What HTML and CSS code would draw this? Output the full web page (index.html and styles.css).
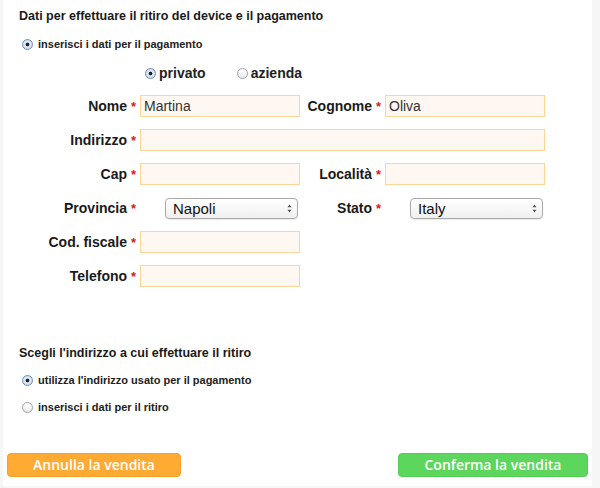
FILE: index.html
```html
<!DOCTYPE html>
<html lang="it">
<head>
<meta charset="utf-8">
<link rel="stylesheet" href="styles.css">
</head>
<body>
<div class="page">
  <div class="content">
    <h2 class="title">Dati per effettuare il ritiro del device e il pagamento</h2>
    <label class="opt small first"><input type="radio" name="pay" checked> inserisci i dati per il pagamento</label>

    <div class="kind">
      <label class="opt big"><input type="radio" name="kind" checked>privato</label>
      <label class="opt big"><input type="radio" name="kind">azienda</label>
    </div>

    <div class="grid">
      <div class="lbl">Nome <span class="req">*</span></div>
      <input class="field" type="text" value="Martina">
      <div class="lbl">Cognome <span class="req">*</span></div>
      <input class="field" type="text" value="Oliva">

      <div class="lbl">Indirizzo <span class="req">*</span></div>
      <input class="field wide" type="text" value="">

      <div class="lbl">Cap <span class="req">*</span></div>
      <input class="field" type="text" value="">
      <div class="lbl">Località <span class="req">*</span></div>
      <input class="field" type="text" value="">

      <div class="lbl">Provincia <span class="req">*</span></div>
      <div class="sel"><select><option>Napoli</option></select><span class="arrows"><svg width="5" height="9" viewBox="0 0 5 9"><path d="M2.5 0.5 L4.5 3.3 H0.5 Z M2.5 8.5 L4.5 5.7 H0.5 Z" fill="#555"/></svg></span></div>
      <div class="lbl">Stato <span class="req">*</span></div>
      <div class="sel"><select><option>Italy</option></select><span class="arrows"><svg width="5" height="9" viewBox="0 0 5 9"><path d="M2.5 0.5 L4.5 3.3 H0.5 Z M2.5 8.5 L4.5 5.7 H0.5 Z" fill="#555"/></svg></span></div>

      <div class="lbl">Cod. fiscale <span class="req">*</span></div>
      <input class="field" type="text" value="">
      <div class="blank"></div>

      <div class="lbl">Telefono <span class="req">*</span></div>
      <input class="field" type="text" value="">
      <div class="blank"></div>
    </div>

    <h2 class="title second">Scegli l'indirizzo a cui effettuare il ritiro</h2>
    <label class="opt small first2"><input type="radio" name="pick" checked> utilizza l'indirizzo usato per il pagamento</label>
    <label class="opt small next"><input type="radio" name="pick"> inserisci i dati per il ritiro</label>
  </div>

  <div class="actions">
    <button class="btn cancel">Annulla la vendita</button>
    <button class="btn confirm">Conferma la vendita</button>
  </div>
</div>
</body>
</html>
```

FILE: styles.css
```css
html, body {
  margin: 0;
  padding: 0;
  background: #f6f6f6;
}
body {
  font-family: "Liberation Sans", Arial, sans-serif;
  color: #222;
}
.page {
  margin-left: 3px;
  width: 589px;
  height: 486px;
  background: #fff;
  display: flex;
  flex-direction: column;
}
.content {
  padding: 8px 0 0 16px;
  flex: 1;
}
.title {
  margin: 0;
  font-size: 12.5px;
  line-height: 16px;
  font-weight: bold;
  color: #1a1a1a;
}
.title.second {
  margin-top: 58px;
}
.opt {
  display: flex;
  align-items: center;
  font-weight: bold;
  color: #222;
}
.opt.small {
  font-size: 11px;
  line-height: 16px;
  margin-left: 3px;
}
.opt.small input {
  margin: 0 5px 0 0;
}
.first { margin-top: 12px; }
.first2 { margin-top: 11px; }
.next { margin-top: 11px; }
.kind {
  display: flex;
  margin-top: 12px;
  padding-left: 126px;
  gap: 31px;
}
.opt.big {
  font-size: 14px;
  line-height: 18px;
}
.opt.big input {
  margin: 0 3px 0 0;
}
input[type="radio"] {
  appearance: none;
  -webkit-appearance: none;
  width: 11px;
  height: 11px;
  border-radius: 50%;
  border: 1px solid #9aa3ad;
  background: linear-gradient(#ffffff, #e9ecef);
  box-sizing: border-box;
  flex: none;
}
input[type="radio"]:checked {
  border-color: #6f8fb8;
  background: radial-gradient(circle, #222 0, #222 1.6px, #dfe8f5 2.2px, #c3d3ea 100%);
}
.grid {
  margin-top: 13px;
  display: grid;
  grid-template-columns: 121px 160px 85px 160px;
  grid-auto-rows: 22px;
  row-gap: 12px;
  align-items: center;
}
.lbl {
  text-align: right;
  padding-right: 4px;
  font-size: 14px;
  font-weight: bold;
  color: #1a1a1a;
  white-space: nowrap;
}
.req {
  color: #e0161b;
  font-size: 13px;
}
.field {
  box-sizing: border-box;
  height: 22px;
  width: 160px;
  margin: 0;
  border: 1px solid #fdd697;
  background: #fff7f1;
  font-family: "Liberation Sans", Arial, sans-serif;
  font-size: 14px;
  color: #333;
  padding: 0 3px;
  outline: none;
}
.field.wide {
  grid-column: 2 / 5;
  width: 405px;
}
.blank { grid-column: span 2; }
.sel {
  position: relative;
  margin-left: 25px;
  width: 133px;
  height: 21px;
}
.sel select {
  appearance: none;
  -webkit-appearance: none;
  box-sizing: border-box;
  width: 133px;
  height: 21px;
  margin: 0;
  border: 1px solid #a9a9a9;
  border-radius: 4px;
  background: linear-gradient(#ffffff, #f0f0f0);
  font-family: "Liberation Sans", Arial, sans-serif;
  font-size: 15px;
  color: #111;
  padding: 0 0 0 7px;
  box-shadow: 0 1px 1px rgba(0,0,0,0.08);
}
.arrows {
  position: absolute;
  right: 6px;
  top: 6px;
  line-height: 0;
  pointer-events: none;
}
.actions {
  display: flex;
  justify-content: space-between;
  padding: 0 4px 9px 4px;
}
.btn {
  height: 24px;
  border-radius: 4px;
  color: #fff;
  font-family: "Open Sans", "DejaVu Sans", sans-serif;
  font-weight: 600;
  font-size: 14px;
  padding: 0;
  line-height: 22px;
}
.cancel {
  width: 174px;
  background: #ffaa33;
  border: 1px solid #f7a12a;
}
.confirm {
  width: 190px;
  background: #5cd65c;
  border: 1px solid #52cc52;
}
```
